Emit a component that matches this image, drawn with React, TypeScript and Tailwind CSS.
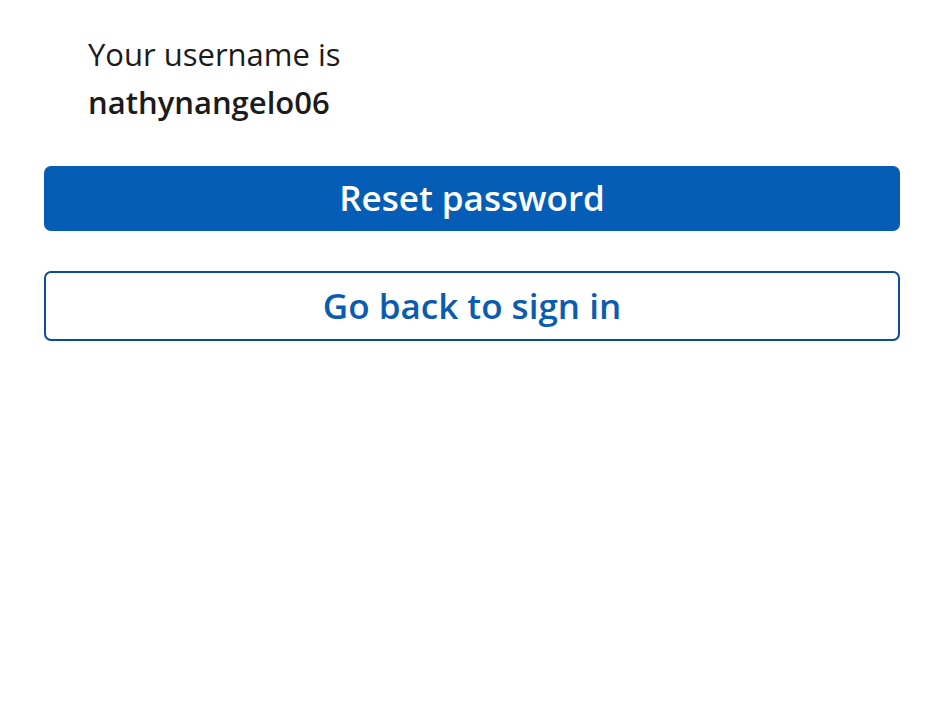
export default function App() {
  return (
    <div className="min-h-screen bg-white px-[44px] pt-[30px]" style={{ fontFamily: '"Open Sans", sans-serif' }}>
      <div className="pl-[44px] text-[#1b1b1b]">
        <p className="text-[31px] leading-[48px]">Your username is</p>
        <p className="text-[31px] leading-[48px] font-semibold">nathynangelo06</p>
      </div>
      <div className="mt-[40px] flex flex-col gap-[40px]">
        <button className="h-[65px] w-full rounded-[7px] bg-[#055db6] text-[35px] font-semibold text-white">
          Reset password
        </button>
        <button className="h-[70px] w-full rounded-[7px] border-2 border-[#0a4d9a] bg-white text-[35px] font-semibold text-[#0b5cae]">
          Go back to sign in
        </button>
      </div>
    </div>
  );
}
